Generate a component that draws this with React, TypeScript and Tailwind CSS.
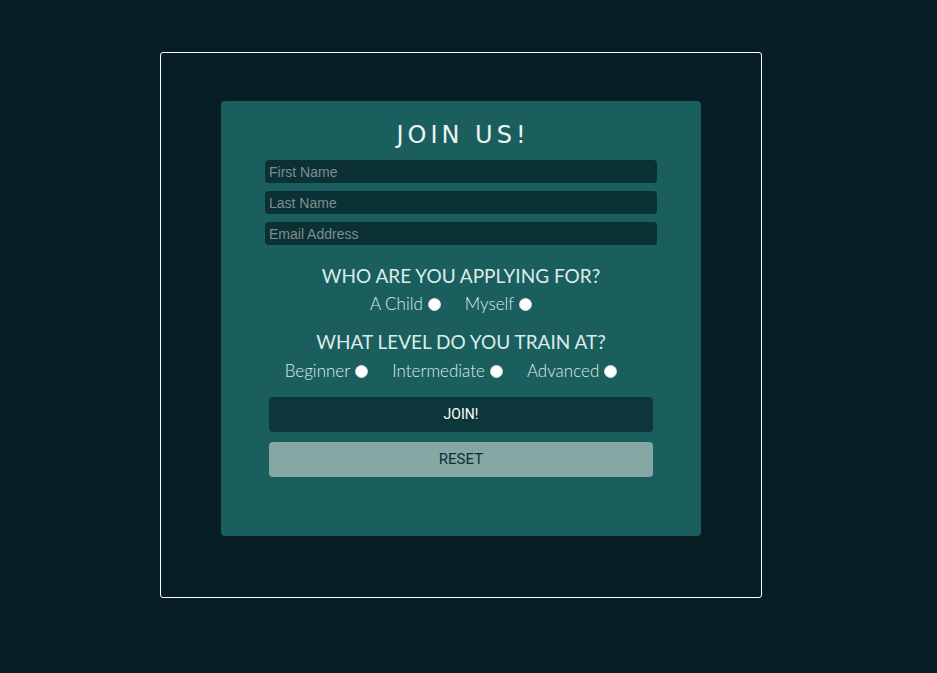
import React from "react";

const RadioOption = ({ label, name }: { label: string; name: string }) => (
  <label className="flex items-center gap-[5px]">
    <span>{label}</span>
    <input
      type="radio"
      name={name}
      className="appearance-none w-[13px] h-[13px] rounded-full bg-white border border-[#d8d8d8]"
    />
  </label>
);

const App = () => {
  return (
    <div className="min-h-screen w-full bg-[#071f24] pt-[52px] pl-[160px]">
      <div className="w-[602px] h-[546px] border border-white rounded-[3px] pt-[48px] pl-[60px]">
        <form className="w-[480px] h-[435px] bg-[#1a5f5e] rounded-[4px] flex flex-col items-center">
          <h1
            className="mt-[19px] h-[30px] leading-[30px] text-[24px] tracking-[4px] pl-[4px] text-[#e8f4f2]"
            style={{ fontFamily: '"DejaVu Sans", "Open Sans", sans-serif' }}
          >
            JOIN US!
          </h1>
          <div
            className="mt-[10px] w-[392px] flex flex-col gap-[8px]"
            style={{ fontFamily: '"Liberation Sans", Arial, sans-serif' }}
          >
            {["First Name", "Last Name", "Email Address"].map((p) => (
              <input
                key={p}
                placeholder={p}
                className="h-[23px] w-full rounded-[4px] bg-[#0b3134] px-[4px] text-[14px] text-white placeholder:text-[#7d8f8e] outline-none"
              />
            ))}
          </div>
          <div
            className="flex flex-col items-center text-[#dcecea]"
            style={{ fontFamily: 'Lato, "Noto Sans", sans-serif' }}
          >
            <h2 className="mt-[19px] h-[24px] leading-[24px] text-[19px]">WHO ARE YOU APPLYING FOR?</h2>
            <div className="mt-[6px] h-[20px] flex items-center gap-[24px] pr-[20px] text-[17px] font-light">
              <RadioOption label="A Child" name="who" />
              <RadioOption label="Myself" name="who" />
            </div>
            <h2 className="mt-[16px] h-[24px] leading-[24px] text-[19px]">WHAT LEVEL DO YOU TRAIN AT?</h2>
            <div className="mt-[7px] h-[20px] flex items-center gap-[24px] pr-[20px] text-[17px] font-light">
              <RadioOption label="Beginner" name="level" />
              <RadioOption label="Intermediate" name="level" />
              <RadioOption label="Advanced" name="level" />
            </div>
          </div>
          <div
            className="mt-[16px] w-[384px] flex flex-col gap-[10px]"
            style={{ fontFamily: 'Roboto, "Liberation Sans", sans-serif' }}
          >
            <button type="button" className="h-[35px] w-full rounded-[4px] bg-[#0c3639] text-[14px] text-white">
              JOIN!
            </button>
            <button type="reset" className="h-[35px] w-full rounded-[4px] bg-[#85a8a5] text-[15px] text-[#0c3036]">
              RESET
            </button>
          </div>
        </form>
      </div>
    </div>
  );
};

export default App;
